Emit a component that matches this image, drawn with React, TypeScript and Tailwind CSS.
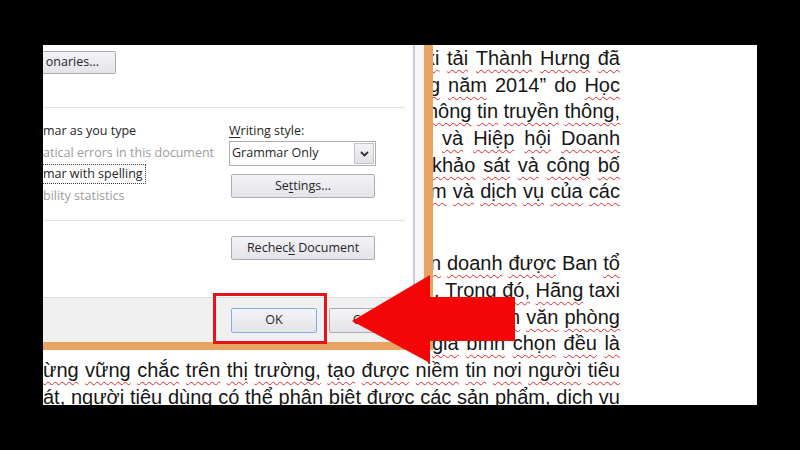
import React from "react";
import clsx from "clsx";

type Line = { pad: string; words: string[] };

const topLines: Line[] = [
  { pad: "pl-[382px]", words: ["xi", "tải", "Thành", "Hưng", "đã"] },
  { pad: "pl-[386px]", words: ["g", "năm", "2014”", "do", "Học"] },
  { pad: "pl-[384px]", words: ["hông", "tin", "truyền", "thông,"] },
  { pad: "pl-[399px]", words: ["và", "Hiệp", "hội", "Doanh"] },
  { pad: "pl-[389px]", words: ["khảo", "sát", "và", "công", "bố"] },
  { pad: "pl-[387px]", words: ["m", "và", "dịch", "vụ", "của", "các"] },
];

const bottomLines: Line[] = [
  { pad: "pl-[387px]", words: ["n", "doanh", "được", "Ban", "tổ"] },
  { pad: "pl-[391px]", words: [".", "Trong", "đó,", "Hãng", "taxi"] },
  { pad: "pl-[466px]", words: ["n", "văn", "phòng"] },
  { pad: "pl-[389px]", words: ["gia", "bình", "chọn", "đều", "là"] },
  { pad: "pl-0", words: "ừng vững chắc trên thị trường, tạo được niềm tin nơi người tiêu".split(" ") },
  { pad: "pl-0", words: "át, người tiêu dùng có thể phân biệt được các sản phẩm, dịch vụ".split(" ") },
];

// words Word did not flag
const plain = new Set(["2014”", "do", "Ban", "taxi", "."]);

function DocLine({ line }: { line: Line }) {
  return (
    <div className={clsx("flex justify-between h-[26.7px] leading-[26.7px] whitespace-nowrap", line.pad)}>
      {line.words.map((w, i) => (
        <span
          key={i}
          className={clsx(
            !plain.has(w) &&
              "underline decoration-wavy decoration-[#e02828] decoration-1 underline-offset-[4px] [text-decoration-skip-ink:none]"
          )}
        >
          {w}
        </span>
      ))}
    </div>
  );
}

function Btn({ className, children }: { className?: string; children: React.ReactNode }) {
  return (
    <div
      className={clsx(
        "flex items-center justify-center border border-[#acabb2] rounded-[2px] bg-linear-to-b from-[#f4f3f7] to-[#e4e3e9]",
        className
      )}
    >
      {children}
    </div>
  );
}

function Dialog() {
  return (
    <div className="absolute left-0 top-0 w-[390px] h-[305px] flex flex-col font-['Open_Sans',sans-serif] text-[12.5px] text-[#262626]">
      <div className="flex flex-1 min-h-0">
        <div className="w-[370px] flex flex-col bg-white overflow-hidden">
          <div className="flex-1 flex flex-col">
            <div className="pt-[6px]">
              <Btn className="w-[73px] h-[23px] border-l-0 rounded-l-none !justify-end pr-[16px]">onaries...</Btn>
            </div>
            <div className="mt-[33px] h-px w-[362px] bg-[#e0e0e0]" />
            <div className="h-[112px] flex">
              <div className="w-[186px] pt-[12px] flex flex-col">
                <div className="h-[21.5px] leading-[21.5px]">mar as you type</div>
                <div className="h-[21.5px] leading-[21.5px] text-[#9c9c9c]">atical errors in this document</div>
                <div className="h-[21.5px] flex items-center">
                  <span className="h-[20px] leading-[18px] border border-dotted border-[#3a3a3a] border-l-0 pr-[2px]">
                    mar with spelling
                  </span>
                </div>
                <div className="h-[21.5px] leading-[21.5px] text-[#9c9c9c]">bility statistics</div>
              </div>
              <div className="flex-1 pt-[12px] flex flex-col">
                <div className="h-[21px] leading-[21px]">
                  <span className="underline underline-offset-2">W</span>riting style:
                </div>
                <div className="w-[147px] h-[25px] border border-[#abadb3] bg-white flex items-center">
                  <span className="flex-1 pl-[2px]">Grammar Only</span>
                  <span className="w-[20px] h-[21px] mr-px border border-[#c4c4c8] bg-linear-to-b from-[#f2f2f4] to-[#e2e2e6] flex items-center justify-center">
                    <svg width="9" height="6" viewBox="0 0 9 6">
                      <polyline points="1,1 4.5,4.5 8,1" fill="none" stroke="#333" strokeWidth="1.8" />
                    </svg>
                  </span>
                </div>
                <Btn className="mt-[8px] ml-[2px] w-[144px] h-[24px]">
                  <span>
                    Se<span className="underline underline-offset-2">t</span>tings...
                  </span>
                </Btn>
              </div>
            </div>
            <div className="h-px w-[362px] bg-[#e0e0e0]" />
            <div className="pt-[15px] pl-[188px]">
              <Btn className="w-[144px] h-[24px]">
                <span>
                  Rechec<span className="underline underline-offset-2">k</span> Document
                </span>
              </Btn>
            </div>
          </div>
          <div className="h-[45px] border-t border-[#dadada] bg-[#f0f0f0] flex items-start pt-[10px] pl-[188px] gap-[12px]">
            <Btn className="shrink-0 w-[86px] h-[25px] !border-[#7eaee3]">OK</Btn>
            <Btn className="shrink-0 w-[86px] h-[25px]">Cancel</Btn>
          </div>
        </div>
        <div className="w-[11px] border-l-2 border-[#c9ccd6] bg-[#f6f6f9]" />
        <div className="w-[9px] bg-[#eaa462]" />
      </div>
      <div className="h-[8px] bg-[#eaa462]" />
    </div>
  );
}

export default function App() {
  return (
    <div className="w-[800px] h-[450px] bg-black flex items-center justify-center">
      <div className="relative w-[714px] h-[360px] bg-white overflow-hidden">
        <div className="w-[577px] flex flex-col font-['Liberation_Sans',Arial,sans-serif] text-[20px] text-[#161616]">
          <div className="flex flex-col">
            {topLines.map((l, i) => (
              <DocLine key={i} line={l} />
            ))}
          </div>
          <div className="mt-[45px] flex flex-col">
            {bottomLines.map((l, i) => (
              <DocLine key={i} line={l} />
            ))}
          </div>
        </div>

        <Dialog />

        <div className="absolute left-[170px] top-[248px] w-[114px] h-[51px] border-[3px] border-[#e3151a]" />

        <svg className="absolute inset-0 pointer-events-none" width="714" height="360" viewBox="0 0 714 360">
          <polygon points="309,276 387,230 387,252 472,252 472,296 387,296 387,318" fill="#f50606" />
        </svg>
      </div>
    </div>
  );
}
